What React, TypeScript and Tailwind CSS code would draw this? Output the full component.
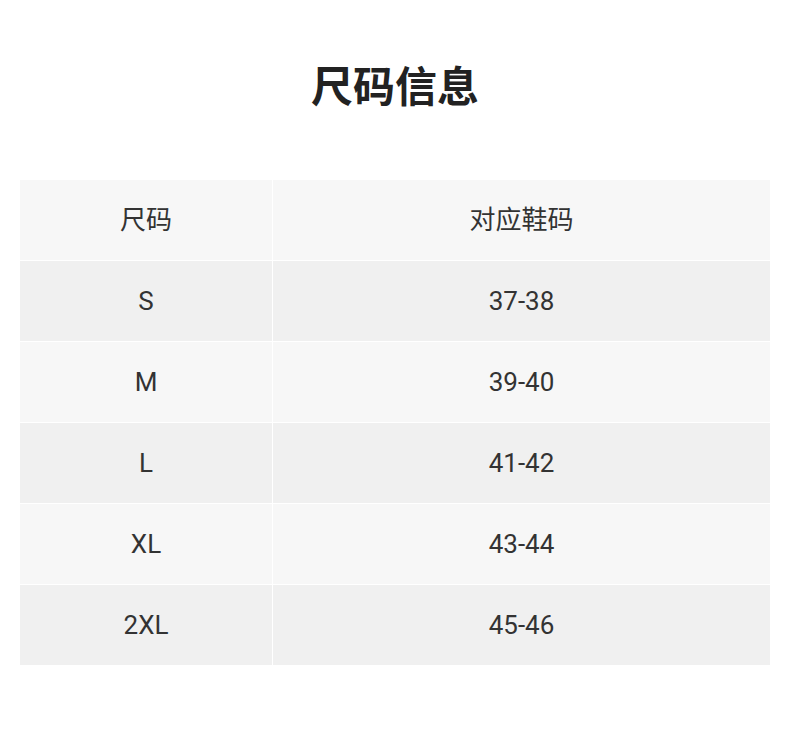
import React from "react";

const rows = [
  ["S", "37-38"],
  ["M", "39-40"],
  ["L", "41-42"],
  ["XL", "43-44"],
  ["2XL", "45-46"],
];

export default function App() {
  return (
    <div
      className="w-[790px] h-[735px] bg-white"
      style={{ fontFamily: 'Roboto, "Noto Sans CJK SC", sans-serif' }}
    >
      <div className="pt-[61px] h-[180px]">
        <h1 className="text-center text-[42px] leading-[54px] font-bold text-[#222222]">尺码信息</h1>
      </div>
      <div className="mx-[20px] grid grid-cols-[252px_1fr] gap-px bg-white text-[26px] text-[#333333]">
        <div className="h-[80px] flex items-center justify-center bg-[#f7f7f7]">尺码</div>
        <div className="h-[80px] flex items-center justify-center bg-[#f7f7f7]">对应鞋码</div>
        {rows.map(([s, n], i) => (
          <React.Fragment key={s}>
            <div className={`h-[80px] flex items-center justify-center ${i % 2 === 0 ? "bg-[#f0f0f0]" : "bg-[#f7f7f7]"}`}>{s}</div>
            <div className={`h-[80px] flex items-center justify-center ${i % 2 === 0 ? "bg-[#f0f0f0]" : "bg-[#f7f7f7]"}`}>{n}</div>
          </React.Fragment>
        ))}
      </div>
    </div>
  );
}
